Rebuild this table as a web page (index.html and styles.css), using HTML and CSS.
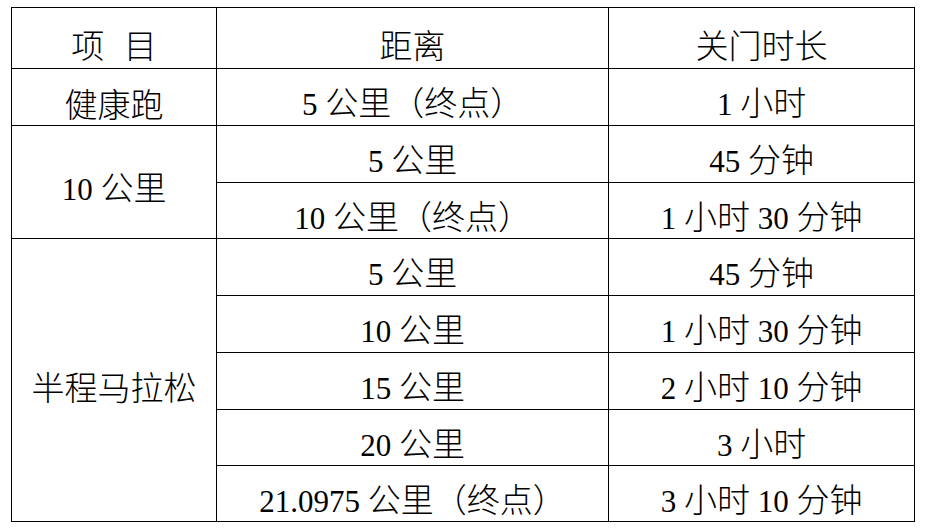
FILE: index.html
```html
<!DOCTYPE html>
<html lang="zh-CN">
<head>
<meta charset="utf-8">
<title>关门时间</title>
<link rel="stylesheet" href="styles.css">
</head>
<body>
<table class="cutoff">
  <colgroup>
    <col class="c1"><col class="c2"><col class="c3">
  </colgroup>
  <thead>
    <tr class="h61">
      <th class="spaced">项 目</th>
      <th>距离</th>
      <th>关门时长</th>
    </tr>
  </thead>
  <tbody>
    <tr class="h57">
      <td>健康跑</td>
      <td><span class="n">5 </span>公里（终点）</td>
      <td><span class="n">1 </span>小时</td>
    </tr>
    <tr class="h57">
      <td rowspan="2"><span class="n">10 </span>公里</td>
      <td><span class="n">5 </span>公里</td>
      <td><span class="n">45 </span>分钟</td>
    </tr>
    <tr class="h56">
      <td><span class="n">10 </span>公里（终点）</td>
      <td><span class="n">1 </span>小时<span class="n"> 30 </span>分钟</td>
    </tr>
    <tr class="h57">
      <td rowspan="5">半程马拉松</td>
      <td><span class="n">5 </span>公里</td>
      <td><span class="n">45 </span>分钟</td>
    </tr>
    <tr class="h57">
      <td><span class="n">10 </span>公里</td>
      <td><span class="n">1 </span>小时<span class="n"> 30 </span>分钟</td>
    </tr>
    <tr class="h57">
      <td><span class="n">15 </span>公里</td>
      <td><span class="n">2 </span>小时<span class="n"> 10 </span>分钟</td>
    </tr>
    <tr class="h56">
      <td><span class="n">20 </span>公里</td>
      <td><span class="n">3 </span>小时</td>
    </tr>
    <tr class="h56">
      <td><span class="n">21.0975 </span>公里（终点）</td>
      <td><span class="n">3 </span>小时<span class="n"> 10 </span>分钟</td>
    </tr>
  </tbody>
</table>
</body>
</html>
```
FILE: styles.css
```css
html, body {
  margin: 0;
  padding: 0;
  background: #ffffff;
}

body {
  padding: 7px 0 0 11px;
}

.cutoff {
  border-collapse: collapse;
  table-layout: fixed;
  width: 903px;
  color: #000000;
  font-family: "Noto Sans CJK SC", "Noto Sans", sans-serif;
  font-size: 33px;
  font-weight: 300;
  line-height: 36px;
}

.c1 { width: 205px; }
.c2 { width: 392px; }
.c3 { width: 306px; }

.cutoff th,
.cutoff td {
  border: 1px solid #000000;
  padding: 12px 0 0 0;
  text-align: center;
  vertical-align: middle;
  font-weight: 300;
  white-space: nowrap;
  box-sizing: border-box;
}

.h61 { height: 61px; }
.h57 { height: 57px; }
.h56 { height: 56px; }

.n {
  font-family: "Liberation Serif", "Times New Roman", serif;
  font-size: 31px;
  font-weight: 400;
}

.spaced {
  word-spacing: 12px;
}
```
